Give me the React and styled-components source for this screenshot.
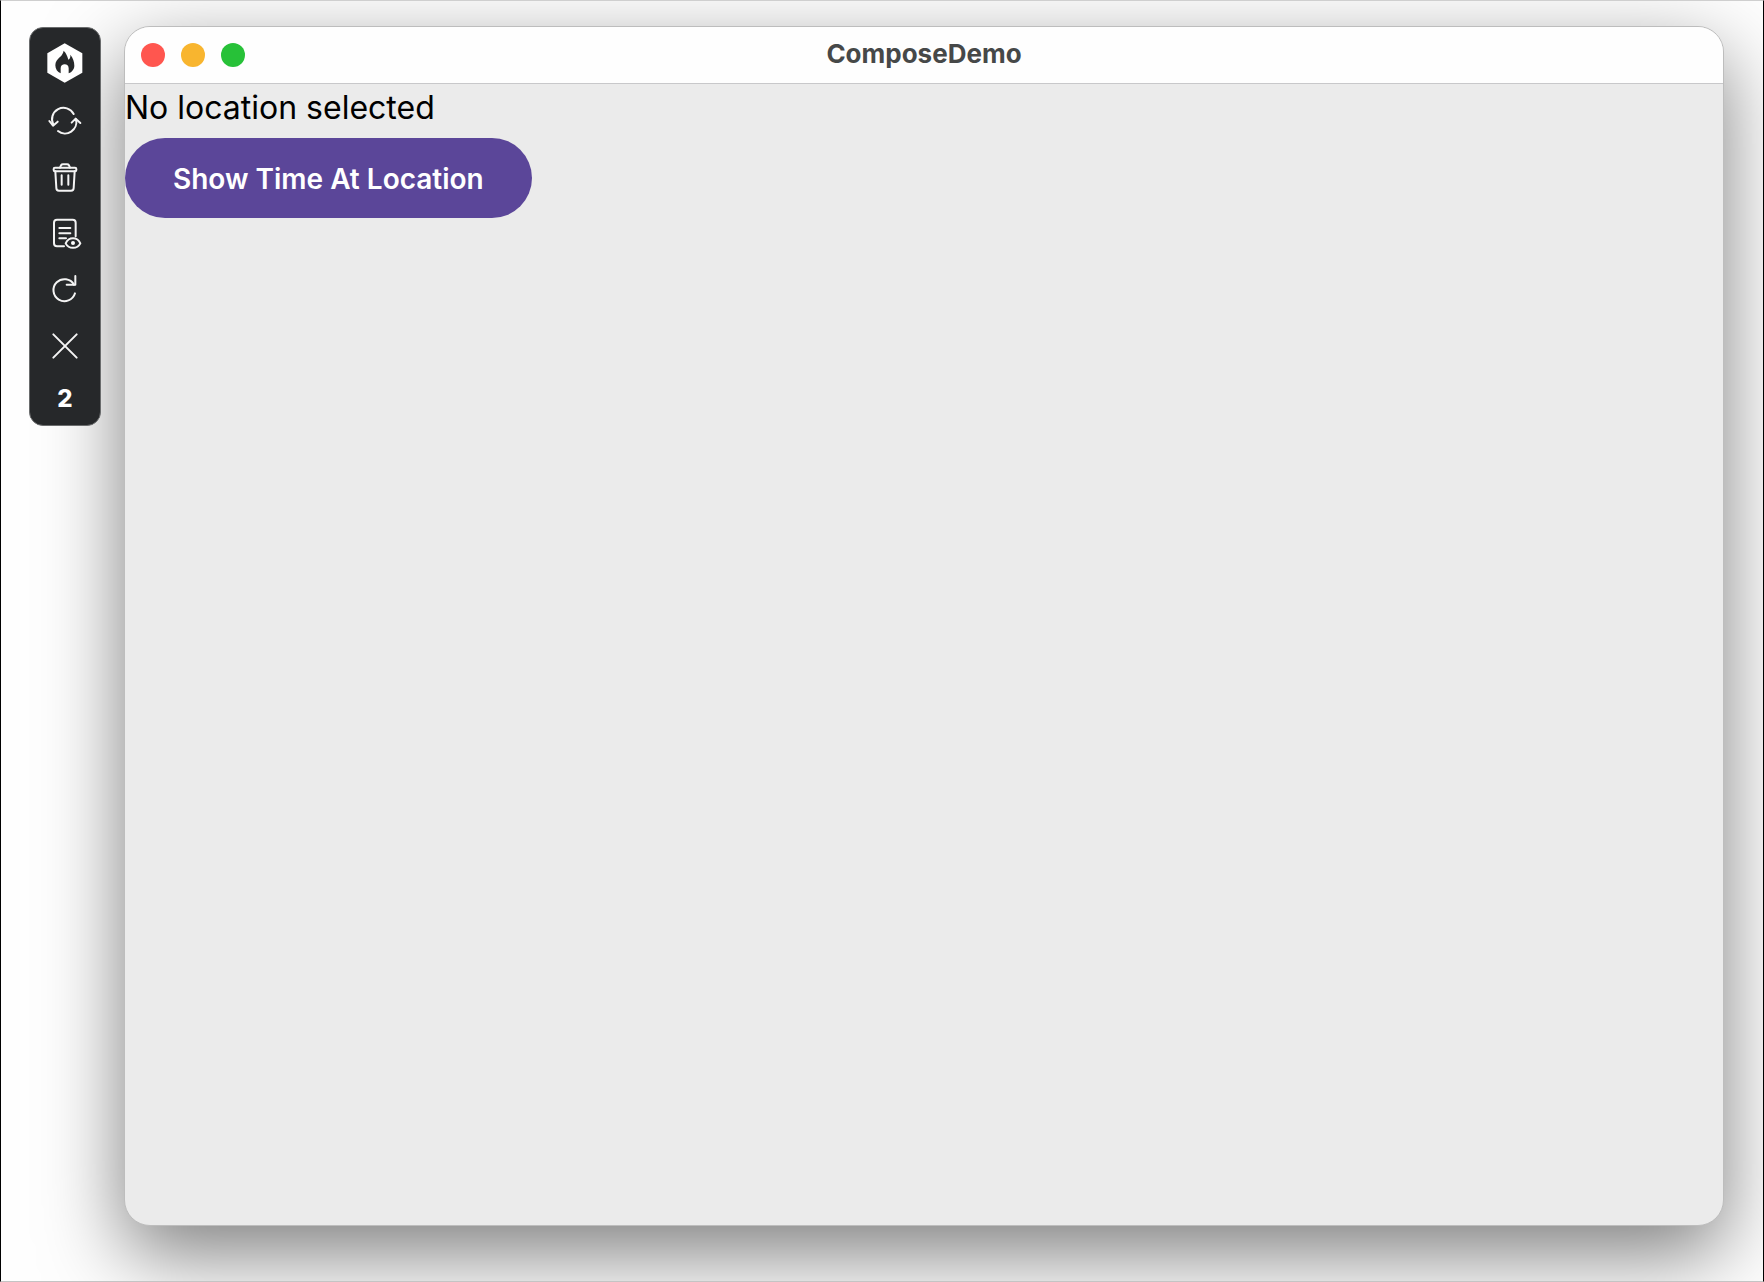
import React from 'react'
import styled, { createGlobalStyle } from 'styled-components'

export default function App() {
    return (
        <Desktop>
            <GlobalStyle />

            <Toolbar aria-label='Hot reload'>
                <Logo>
                    <svg width='36' height='40' viewBox='0 0 108 120' aria-hidden='true'>
                        <path fill='#fff' d='M53 1 L106 31 V89 L53 119 L1 89 V31 Z' />
                        <path
                            fill='#26282a'
                            d='M50 23 C57 30 61 38 64 50 C69 47 71 42 70 35 C78 44 82 56 82 68 C82 78 75 87 65 91 V76 C65 68 60 64 53 64 C46 64 41 68 41 76 V91 C31 87 25 78 25 67 C25 56 31 50 38 43 C45 37 48 31 50 23 Z'
                        />
                    </svg>
                </Logo>

                <ToolButton type='button' aria-label='Reload'>
                    <Icon>
                        <path d='M13 56 A34 34 0 0 1 74 24' />
                        <path d='M1 45 L12 59 L26 47' />
                        <path d='M81 40 A34 34 0 0 1 27 75' />
                        <path d='M68 50 L80 38 L94 51' />
                    </Icon>
                </ToolButton>

                <ToolButton type='button' aria-label='Clear'>
                    <Icon>
                        <rect x='14' y='17' width='68' height='11' rx='4' />
                        <path d='M33 17 L36 10 Q38 7 42 7 H54 Q58 7 60 10 L63 17' />
                        <path d='M19 28 L22 78 Q22 86 30 86 H66 Q74 86 74 78 L77 28' />
                        <path d='M38 40 V68 M58 40 V68' />
                    </Icon>
                </ToolButton>

                <ToolButton type='button' aria-label='Show logs'>
                    <Icon>
                        <path d='M45 85 H24 Q15 85 15 76 V14 Q15 5 24 5 H71 Q80 5 80 14 V55' />
                        <path d='M31 30 H64 M31 46 H64 M31 61 H51' />
                        <path d='M50 76 C59 56 85 56 94 76 C85 94 59 94 50 76 Z' />
                        <circle cx='72' cy='75' r='6' fill='#fff' stroke='none' />
                    </Icon>
                </ToolButton>

                <ToolButton type='button' aria-label='Restart'>
                    <Icon>
                        <path d='M78 58 A33 33 0 1 1 75 32' />
                        <path d='M79 6 V32 H53' />
                    </Icon>
                </ToolButton>

                <ToolButton type='button' aria-label='Close'>
                    <Icon>
                        <path d='M13 13 L83 83 M83 13 L13 83' />
                    </Icon>
                </ToolButton>

                <Count>2</Count>
            </Toolbar>

            <Window>
                <TitleBar>
                    <Lights>
                        <Light type='button' aria-label='Close window' color='#ff564f' />
                        <Light type='button' aria-label='Minimize window' color='#f8b52f' />
                        <Light type='button' aria-label='Zoom window' color='#27c138' />
                    </Lights>
                    <Title>ComposeDemo</Title>
                </TitleBar>

                <Content>
                    <Message>No location selected</Message>
                    <ShowButton type='button'>Show Time At Location</ShowButton>
                </Content>
            </Window>
        </Desktop>
    )
}

function Icon({ children }) {
    return (
        <IconSvg viewBox='0 0 96 96' aria-hidden='true'>
            {children}
        </IconSvg>
    )
}

// Styled Components

const GlobalStyle = createGlobalStyle`
* {
    box-sizing: border-box;
}

body {
    margin: 0;
    background: #fefefe;
    font-family: Inter, "Liberation Sans", sans-serif;
}

button {
    font-family: inherit;
    border: none;
    padding: 0;
    cursor: pointer;
}
`

const Desktop = styled.div`
display: flex;
align-items: stretch;
gap: 23px;
min-height: 100vh;
padding: 25px 39px 55px 28px;
overflow: hidden;
border: 1px solid #000;
border-top-color: #cfcfcf;
border-bottom-color: #c4c4c4;
`

const Toolbar = styled.nav`
display: flex;
flex-direction: column;
align-items: center;
align-self: flex-start;
flex: none;
z-index: 1;
width: 72px;
margin-top: 1px;
background: #26282a;
border: 1px solid #6a6c6d;
border-radius: 14px;
`

const Logo = styled.div`
display: flex;
align-items: center;
height: 66px;
padding-top: 3px;
`

const ToolButton = styled.button`
display: flex;
align-items: center;
justify-content: center;
width: 100%;
height: 56px;
background: transparent;
`

const IconSvg = styled.svg`
width: 32px;
height: 32px;
fill: none;
stroke: #f4f4f4;
stroke-width: 6;
stroke-linecap: round;
stroke-linejoin: round;
overflow: visible;
`

const Count = styled.span`
height: 51px;
color: #fff;
font-size: 24px;
font-weight: 800;
line-height: 50px;
`

const Window = styled.main`
display: flex;
flex-direction: column;
flex: 1;
min-width: 0;
background: #ebebeb;
border: 1px solid #bdbdbd;
border-radius: 26px;
box-shadow: 0 28px 80px rgba(0, 0, 0, 0.5);
`

const TitleBar = styled.header`
display: grid;
grid-template-columns: 1fr auto 1fr;
align-items: center;
height: 57px;
padding: 0 16px;
background: #fefefe;
border-bottom: 1px solid #c8c8ca;
border-radius: 25px 25px 0 0;
`

const Lights = styled.div`
display: flex;
gap: 16px;
`

const Light = styled.button`
width: 24px;
height: 24px;
background: ${props => props.color};
border-radius: 50%;
`

const Title = styled.h1`
margin: 0;
padding-bottom: 2px;
color: #464848;
font-size: 26px;
font-weight: 700;
line-height: 32px;
`

const Content = styled.section`
display: flex;
flex-direction: column;
align-items: flex-start;
flex: 1;
`

const Message = styled.p`
margin: 0;
color: #000;
font-size: 32px;
line-height: 48px;
`

const ShowButton = styled.button`
height: 80px;
margin-top: 6px;
padding: 2px 48px 0;
background: #5b4699;
color: #fff;
font-size: 28px;
font-weight: 600;
border-radius: 40px;
`
